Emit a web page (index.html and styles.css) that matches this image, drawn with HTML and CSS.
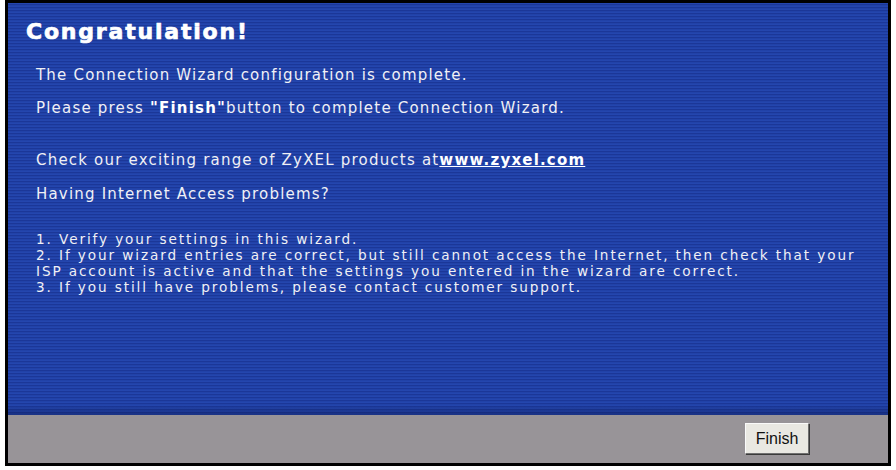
FILE: index.html
```html
<!DOCTYPE html>
<html>
<head>
<meta charset="utf-8">
<link rel="stylesheet" href="styles.css">
</head>
<body>
<div class="frame">
  <div class="panel">
    <h1 class="title">Congratulation!</h1>
    <div class="content">
      <p class="line l1">The Connection Wizard configuration is complete.</p>
      <p class="line l2">Please press <b>"Finish"</b>button to complete Connection Wizard.</p>
      <p class="line l3">Check our exciting range of ZyXEL products at<a class="link" href="#">www.zyxel.com</a></p>
      <p class="line l4">Having Internet Access problems?</p>
      <div class="list">
        <p class="item">1. Verify your settings in this wizard.</p>
        <p class="item">2. If your wizard entries are correct, but still cannot access the Internet, then check that your</p>
        <p class="item">ISP account is active and that the settings you entered in the wizard are correct.</p>
        <p class="item">3. If you still have problems, please contact customer support.</p>
      </div>
    </div>
  </div>
  <div class="footer">
    <button class="btn">Finish</button>
  </div>
</div>
</body>
</html>
```
FILE: styles.css
```css
html, body {
  margin: 0;
  padding: 0;
  background: #ffffff;
}
.frame {
  margin-left: 5px;
  width: 880px;
  border: 3px solid #000000;
  display: flex;
  flex-direction: column;
}
.panel {
  height: 412px;
  background:
    linear-gradient(to bottom, rgba(0,0,0,0) 0, rgba(0,0,0,0) 402px, rgba(10,20,70,0.4) 412px),
    repeating-linear-gradient(to bottom, #2446ae 0, #2446ae 1px, #1b3798 1px, #1b3798 2px, #2142a8 2px, #2142a8 3px);
  color: #f0f0f5;
  font-family: "DejaVu Sans", Verdana, sans-serif;
  box-sizing: border-box;
  padding: 0 0 0 28px;
}
.title {
  margin: 0 0 0 -10px;
  padding-top: 17px;
  font-size: 22px;
  letter-spacing: 1.8px;
  font-weight: bold;
  color: #ffffff;
  -webkit-text-stroke: 0.7px #ffffff;
  line-height: 24px;
}
.content {
  font-size: 15px;
  letter-spacing: 1.2px;
  line-height: 16px;
}
.line {
  margin: 0;
}
.l1 { margin-top: 23px; }
.l2 { margin-top: 17px; }
.l3 { margin-top: 36px; }
.l4 { margin-top: 18px; }
.list {
  margin-top: 29px;
  display: flex;
  flex-direction: column;
}
.item {
  margin: 0;
  height: 16px;
  font-size: 13.6px;
  letter-spacing: 1.9px;
  line-height: 16px;
}
.line b { font-weight: bold; color: #ffffff; }
.link {
  color: #ffffff;
  font-weight: bold;
  text-decoration: underline;
}
.footer {
  height: 48px;
  background: #989498;
  display: flex;
  justify-content: flex-end;
  align-items: flex-start;
  padding-right: 79px;
}
.btn {
  width: 64px;
  height: 31px;
  margin-top: 8px;
  background: #e9e8e2;
  border: 1px solid #fafafa;
  border-right-color: #707070;
  border-bottom-color: #707070;
  box-shadow: 1px 1px 0 #3a3a3a;
  font-family: "Liberation Sans", Arial, sans-serif;
  font-size: 16px;
  color: #111111;
  padding: 0;
}
```
